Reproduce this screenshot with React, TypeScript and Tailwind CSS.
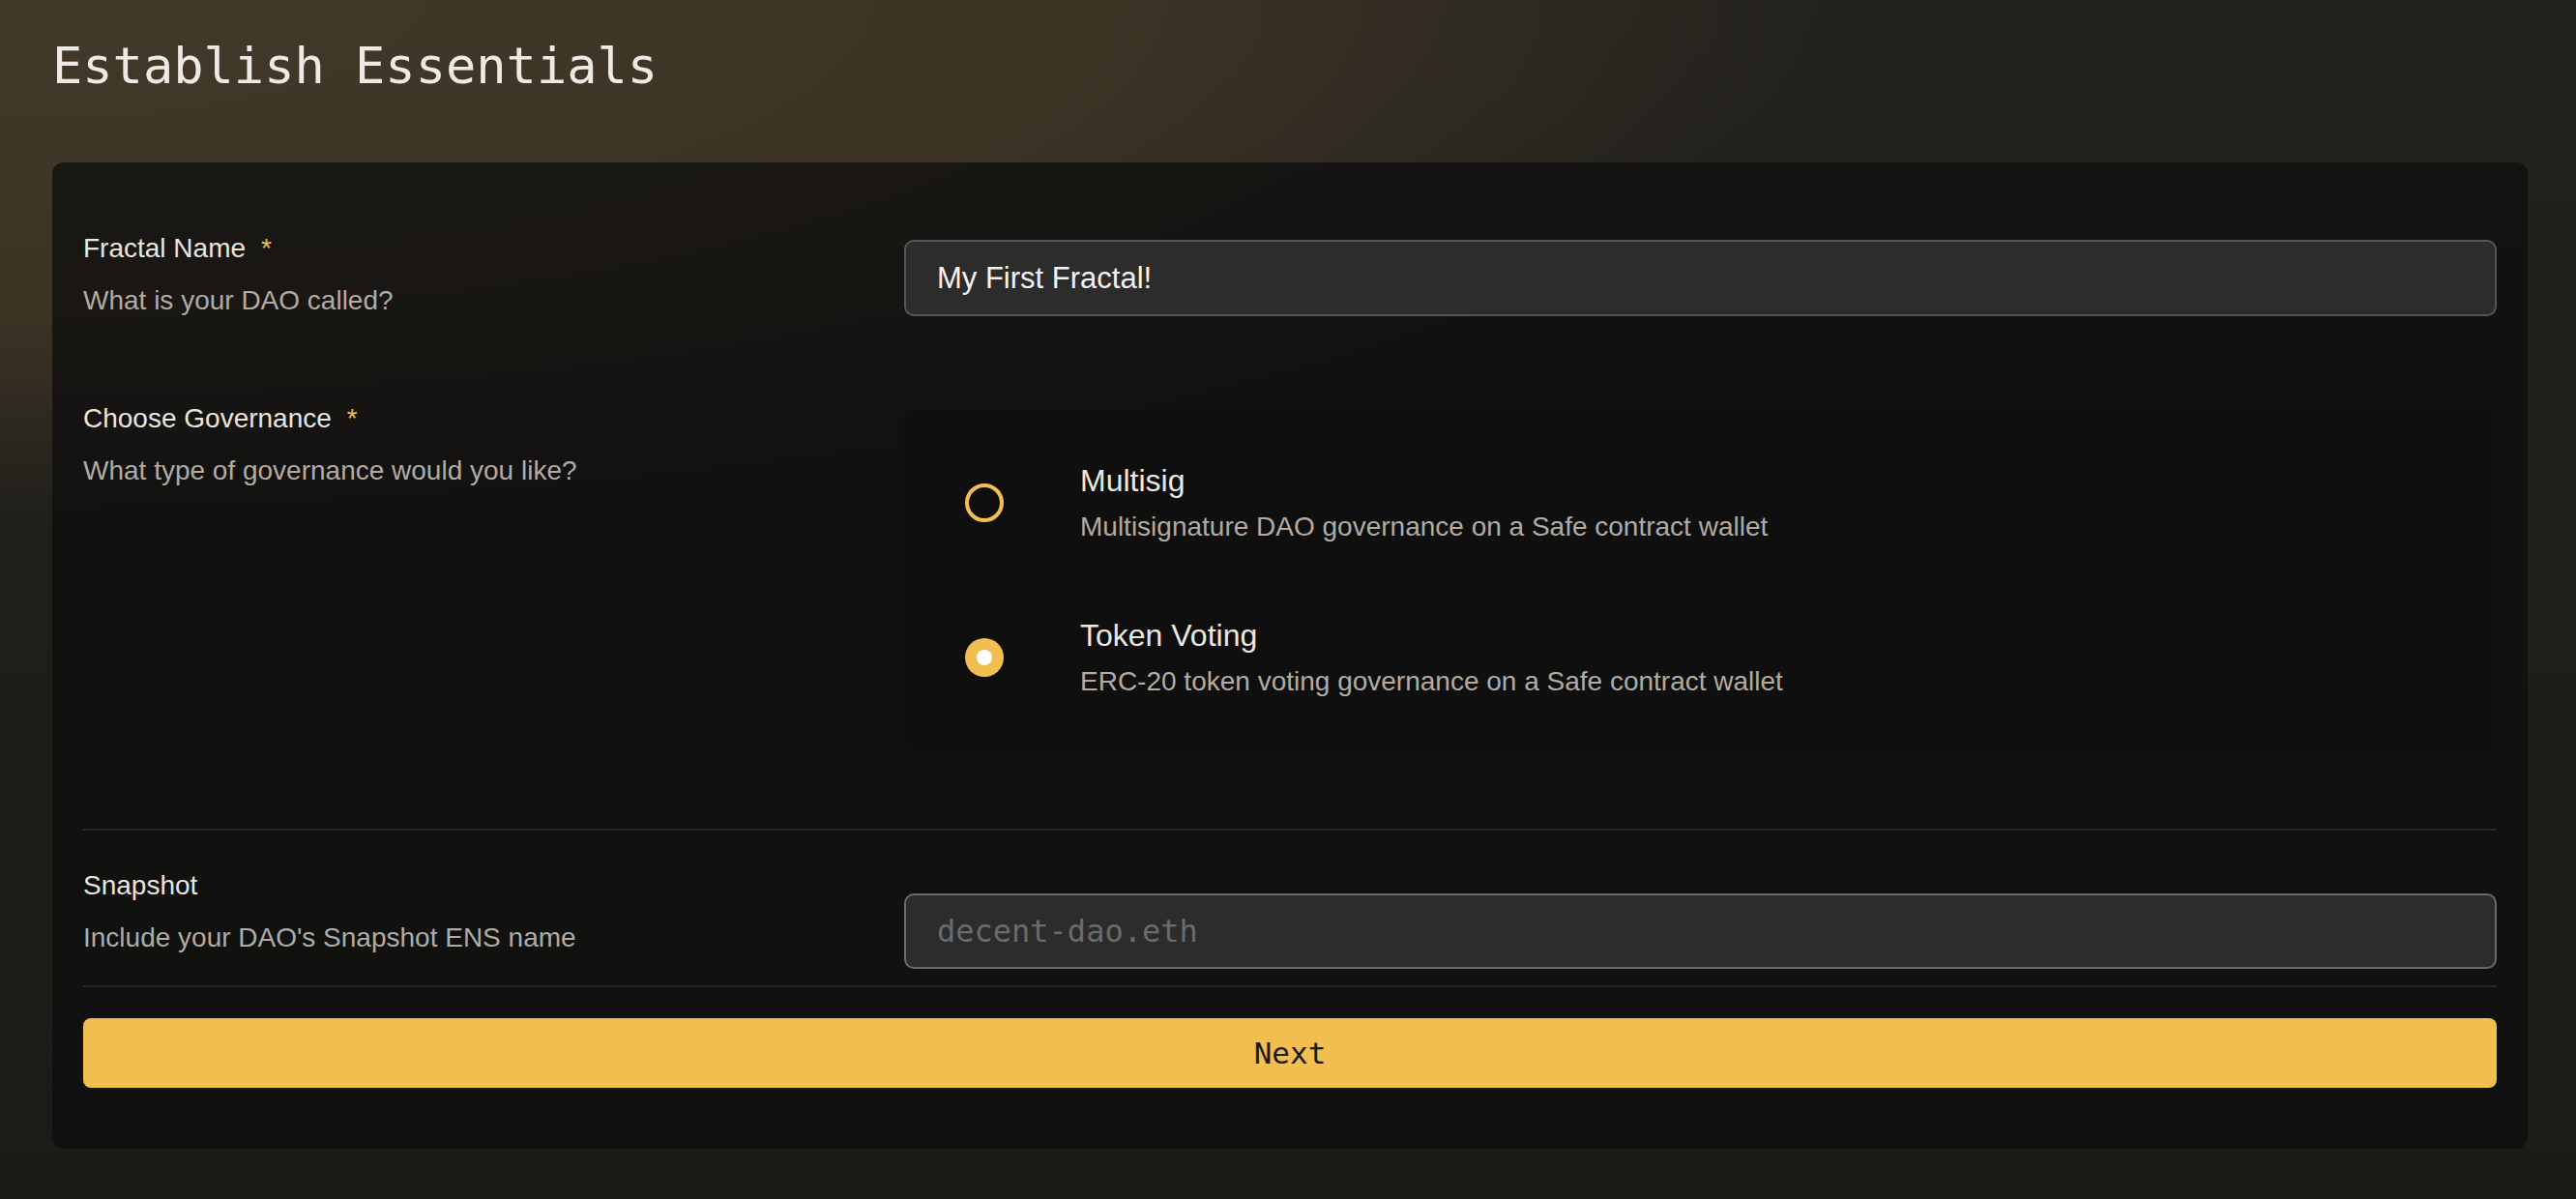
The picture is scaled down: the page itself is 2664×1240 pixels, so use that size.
import { useState } from "react";

const Label = ({ text, required }: { text: string; required?: boolean }) => (
  <div className="text-[28px] leading-[34px] text-[#e9e5df]">
    {text}
    {required && <span className="ml-[16px] text-[#f0bf50]">*</span>}
  </div>
);

const Desc = ({ text }: { text: string }) => (
  <div className="mt-[20px] text-[28px] leading-[34px] text-[#b0aca5]">{text}</div>
);

const options = [
  {
    key: "multisig",
    title: "Multisig",
    desc: "Multisignature DAO governance on a Safe contract wallet",
  },
  {
    key: "token",
    title: "Token Voting",
    desc: "ERC-20 token voting governance on a Safe contract wallet",
  },
];

const App = () => {
  const [name, setName] = useState("My First Fractal!");
  const [snapshot, setSnapshot] = useState("");
  const [governance, setGovernance] = useState("token");

  return (
    <div className="min-h-screen w-full bg-[image:radial-gradient(ellipse_2000px_560px_at_0%_0%,rgba(66,57,42,1)_0%,rgba(60,51,37,1)_58%,rgba(60,51,37,0)_97%),linear-gradient(to_bottom,#22211e,#1c1b18)] pl-[54px] pr-[50px] pt-[42px] pb-[53px] font-['Liberation_Sans',sans-serif]">
      <h1 className="font-['DejaVu_Sans_Mono',monospace] text-[52px] leading-[52px] font-normal text-[#ede9e3]">
        Establish Essentials
      </h1>

      <div className="mt-[74px] rounded-[12px] bg-[rgba(14,14,13,0.75)] px-[32px] pt-[72px] pb-[63px]">
        {/* name */}
        <div className="flex items-start">
          <div className="w-[849px] shrink-0">
            <Label text="Fractal Name" required />
            <Desc text="What is your DAO called?" />
          </div>
          <input
            value={name}
            onChange={(e) => setName(e.target.value)}
            className="mt-[8px] h-[79px] min-w-0 flex-1 rounded-[10px] border-2 border-[#555553] bg-[#2c2c2c] px-[32px] text-[31px] text-[#f4f2ee] outline-none"
          />
        </div>

        {/* governance */}
        <div className="mt-[88px] flex items-start">
          <div className="w-[849px] shrink-0">
            <Label text="Choose Governance" required />
            <Desc text="What type of governance would you like?" />
          </div>
          <div className="mt-[8px] flex flex-1 flex-col gap-[76px] rounded-[12px] bg-[#0f0f0f] py-[54px] pl-[63px]">
            {options.map((opt) => {
              const active = governance === opt.key;
              return (
                <button
                  key={opt.key}
                  onClick={() => setGovernance(opt.key)}
                  className="flex items-center gap-[79px] text-left"
                >
                  {active ? (
                    <span className="flex h-[40px] w-[40px] shrink-0 items-center justify-center rounded-full bg-[#f0bf50]">
                      <span className="h-[16px] w-[16px] rounded-full bg-white" />
                    </span>
                  ) : (
                    <span className="h-[40px] w-[40px] shrink-0 rounded-full border-[4px] border-[#f0bf50]" />
                  )}
                  <span className="flex flex-col">
                    <span className="text-[32px] leading-[38px] text-[#ebe7e1]">{opt.title}</span>
                    <span className="mt-[12px] text-[28px] leading-[34px] text-[#b0aca5]">
                      {opt.desc}
                    </span>
                  </span>
                </button>
              );
            })}
          </div>
        </div>

        <div className="mt-[81px] h-[2px] bg-[#262624]" />

        {/* snapshot */}
        <div className="mt-[40px] flex items-start">
          <div className="w-[849px] shrink-0">
            <Label text="Snapshot" />
            <Desc text="Include your DAO's Snapshot ENS name" />
          </div>
          <input
            value={snapshot}
            onChange={(e) => setSnapshot(e.target.value)}
            placeholder="decent-dao.eth"
            className="mt-[25px] h-[78px] min-w-0 flex-1 rounded-[10px] border-2 border-[#6a6a6a] bg-[#2c2c2c] px-[32px] font-['DejaVu_Sans_Mono',monospace] text-[32px] text-[#f4f2ee] outline-none placeholder:text-[#6b6b6b]"
          />
        </div>

        <div className="mt-[17px] h-[2px] bg-[#262624]" />

        <button className="mt-[32px] h-[72px] w-full rounded-[8px] bg-[#f0bf50] font-['DejaVu_Sans_Mono',monospace] text-[31px] text-[#1b1a17]">
          Next
        </button>
      </div>
    </div>
  );
};

export default App;
